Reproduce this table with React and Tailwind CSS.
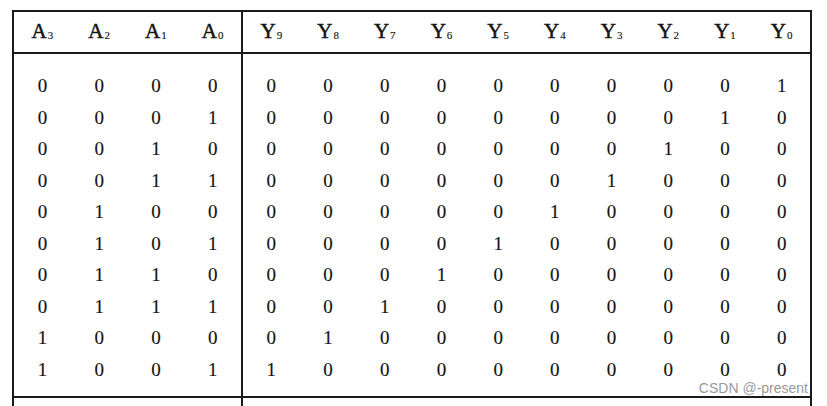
const inputs = ['3', '2', '1', '0'];
const outputs = ['9', '8', '7', '6', '5', '4', '3', '2', '1', '0'];

// 4-to-10 line decoder truth table (8421 BCD)
const rows = Array.from({ length: 10 }, (_, n) => ({
  a: [3, 2, 1, 0].map((b) => (n >> b) & 1),
  y: [9, 8, 7, 6, 5, 4, 3, 2, 1, 0].map((k) => (k === n ? 1 : 0)),
}));

function Head({ letter, sub }) {
  return (
    <div className="flex-1 flex items-center justify-center">
      <span className="text-[21px] leading-none [-webkit-text-stroke:0.5px_#141414]">{letter}</span>
      <span className="text-[11px] leading-none relative top-[4px] ml-[1px]">{sub}</span>
    </div>
  );
}

function Section({ heads, letter, cells, className }) {
  return (
    <div className={`flex flex-col ${className}`}>
      <div className="flex h-[42px] border-b-2 border-[#1a1a1a] pb-[2px]">
        {heads.map((s, i) => (
          <Head key={i} letter={letter} sub={s} />
        ))}
      </div>
      <div className="flex flex-col pt-[16px] pb-[11px] border-b-2 border-[#1a1a1a]">
        {cells.map((r, i) => (
          <div key={i} className="flex h-[31.5px] items-center">
            {r.map((v, j) => (
              <div key={j} className="flex-1 text-center text-[19px] leading-[31.5px]">
                {v}
              </div>
            ))}
          </div>
        ))}
      </div>
      <div className="h-[20px]" />
    </div>
  );
}

export default function App() {
  return (
    <div className="relative w-[827px] h-[406px] overflow-hidden bg-white pl-3 pt-[10px] font-['Liberation_Serif',serif] text-[#141414] [-webkit-text-stroke:0.15px_#141414]">
      <div className="flex w-[800px] border-l-2 border-t-2 border-r-2 border-[#1a1a1a]">
        <Section
          className="w-[229px] border-r-2 border-[#1a1a1a]"
          heads={inputs}
          letter="A"
          cells={rows.map((r) => r.a)}
        />
        <Section
          className="flex-1"
          heads={outputs}
          letter="Y"
          cells={rows.map((r) => r.y)}
        />
      </div>
      <div className="absolute right-[19px] top-[381px] font-['Liberation_Sans',sans-serif] text-[14px] leading-none text-[#9a9a9a] [-webkit-text-stroke:0]">
        CSDN @-present
      </div>
    </div>
  );
}
